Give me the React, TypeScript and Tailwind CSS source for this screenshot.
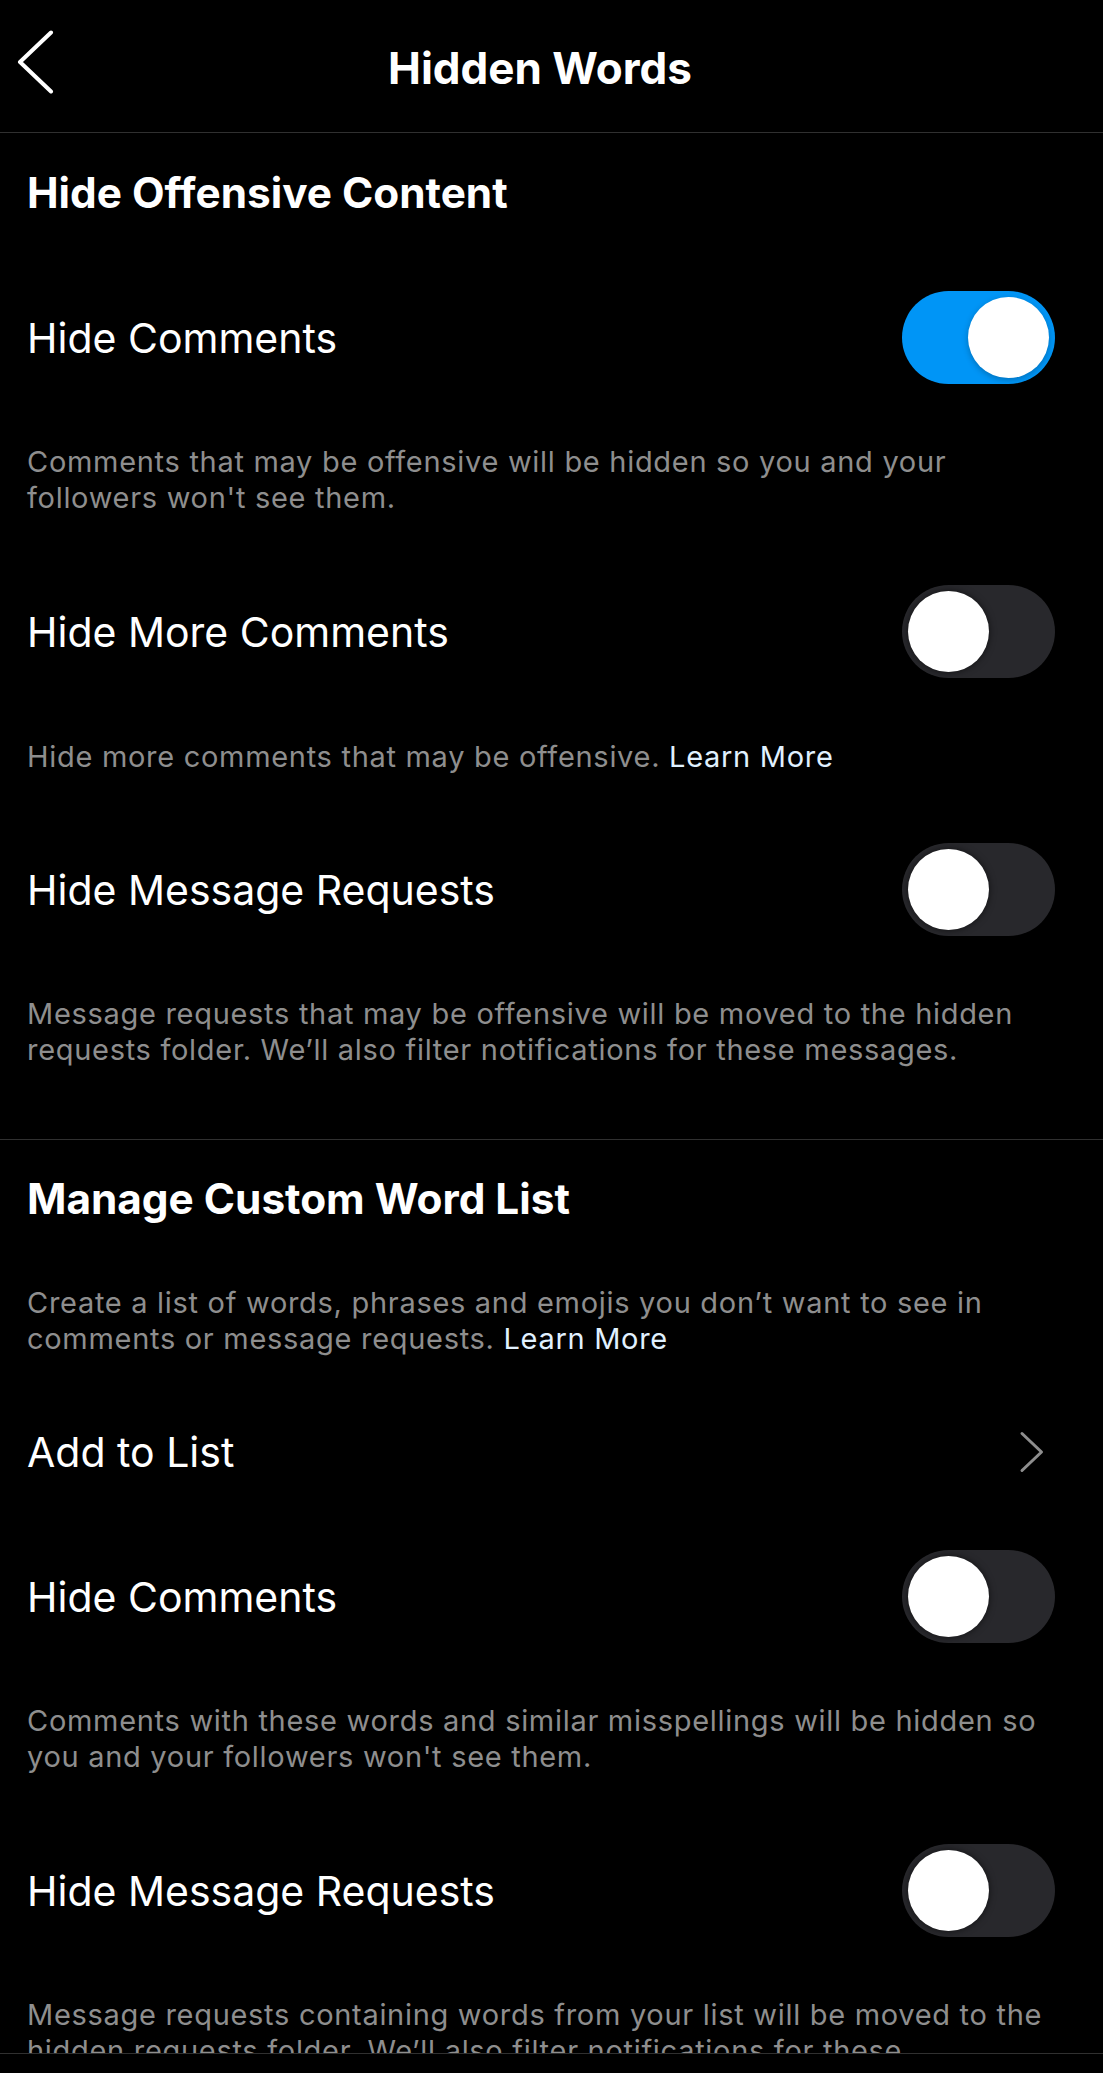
import React, { useState } from 'react';

/**
 * Hidden Words settings screen (dark)
 */

function BackChevron() {
  return (
    <svg width="38" height="64" viewBox="0 0 38 64" className="ml-[16px] mb-[9px]">
      <path d="M35 2.5 L4 32 L35 61.5" fill="none" stroke="#ffffff" strokeWidth="4" strokeLinecap="round" strokeLinejoin="round" />
    </svg>
  );
}

function NextChevron() {
  return (
    <svg width="26" height="42" viewBox="0 0 26 42">
      <path d="M3 2.5 L22.5 21 L3 39.5" fill="none" stroke="#8e8e8e" strokeWidth="3" strokeLinecap="round" strokeLinejoin="round" />
    </svg>
  );
}

function Toggle({ on, onChange }: { on: boolean; onChange: () => void }) {
  return (
    <button
      type="button"
      onClick={onChange}
      className={`flex h-[93px] w-[153px] shrink-0 items-center rounded-full p-[6px] ${
        on ? 'justify-end bg-[#0095f6]' : 'justify-start bg-[#28282c]'
      }`}
    >
      <span
        className={`block h-[81px] w-[81px] rounded-full bg-white ${
          on ? 'shadow-[0_2px_6px_rgba(0,0,0,0.25)]' : 'shadow-[0_0_7px_rgba(0,0,0,0.6)]'
        }`}
      />
    </button>
  );
}

function Row({ label, children, className = '' }: { label: string; children: React.ReactNode; className?: string }) {
  return (
    <div className={`flex h-[93px] items-center justify-between pl-[27px] pr-[48px] ${className}`}>
      <span className="text-[41px] leading-[50px] text-white">{label}</span>
      {children}
    </div>
  );
}

function Desc({ children, className = '' }: { children: React.ReactNode; className?: string }) {
  return (
    <p className={`px-[27px] text-[29px] leading-[36px] tracking-[0.7px] whitespace-nowrap text-[#8e8e8e] ${className}`}>
      {children}
    </p>
  );
}

function LearnMore() {
  return <span className="text-[#e0f1ff]">Learn More</span>;
}

export default function App() {
  const [state, setState] = useState({
    hideComments: true,
    hideMore: false,
    hideRequests: false,
    customComments: false,
    customRequests: false,
  });

  const flip = (key: keyof typeof state) => () => setState((s) => ({ ...s, [key]: !s[key] }));

  return (
    <div className="flex h-[2073px] w-full flex-col overflow-hidden bg-black font-[Inter,'Noto_Sans',sans-serif] text-white">
      {/* Header */}
      <header className="grid h-[133px] shrink-0 grid-cols-[60px_1fr_83px] items-center border-b border-[#303030]">
        <BackChevron />
        <h1 className="mt-[3px] text-center text-[44px] font-bold leading-[50px]">Hidden Words</h1>
        <div />
      </header>

      <main className="flex-1 overflow-hidden">
        {/* Hide Offensive Content */}
        <section className="border-b border-[#303030] pt-[35px] pb-[71px]">
          <h2 className="px-[27px] text-[42.3px] font-bold leading-[50px]">Hide Offensive Content</h2>

          <Row label="Hide Comments" className="mt-[73px]">
            <Toggle on={state.hideComments} onChange={flip('hideComments')} />
          </Row>
          <Desc className="mt-[60px]">
            Comments that may be offensive will be hidden so you and your
            <br />
            followers won't see them.
          </Desc>

          <Row label="Hide More Comments" className="mt-[69px]">
            <Toggle on={state.hideMore} onChange={flip('hideMore')} />
          </Row>
          <Desc className="mt-[61px]">
            Hide more comments that may be offensive. <LearnMore />
          </Desc>

          <Row label="Hide Message Requests" className="mt-[68px]">
            <Toggle on={state.hideRequests} onChange={flip('hideRequests')} />
          </Row>
          <Desc className="mt-[60px]">
            Message requests that may be offensive will be moved to the hidden
            <br />
            requests folder. We’ll also filter notifications for these messages.
          </Desc>
        </section>

        {/* Manage Custom Word List */}
        <section className="pt-[34px]">
          <h2 className="px-[27px] text-[42.3px] font-bold leading-[50px]">Manage Custom Word List</h2>
          <Desc className="mt-[61px]">
            Create a list of words, phrases and emojis you don’t want to see in
            <br />
            comments or message requests. <LearnMore />
          </Desc>

          <Row label="Add to List" className="mt-[48px] !pr-[58px]">
            <NextChevron />
          </Row>

          <Row label="Hide Comments" className="mt-[52px]">
            <Toggle on={state.customComments} onChange={flip('customComments')} />
          </Row>
          <Desc className="mt-[60px]">
            Comments with these words and similar misspellings will be hidden so
            <br />
            you and your followers won't see them.
          </Desc>

          <Row label="Hide Message Requests" className="mt-[69px]">
            <Toggle on={state.customRequests} onChange={flip('customRequests')} />
          </Row>
          <Desc className="mt-[60px]">
            Message requests containing words from your list will be moved to the
            <br />
            hidden requests folder. We’ll also filter notifications for these
            <br />
            messages.
          </Desc>
        </section>
      </main>

      {/* Bottom bar */}
      <footer className="h-[20px] shrink-0 border-t border-[#303030] bg-black" />
    </div>
  );
}
